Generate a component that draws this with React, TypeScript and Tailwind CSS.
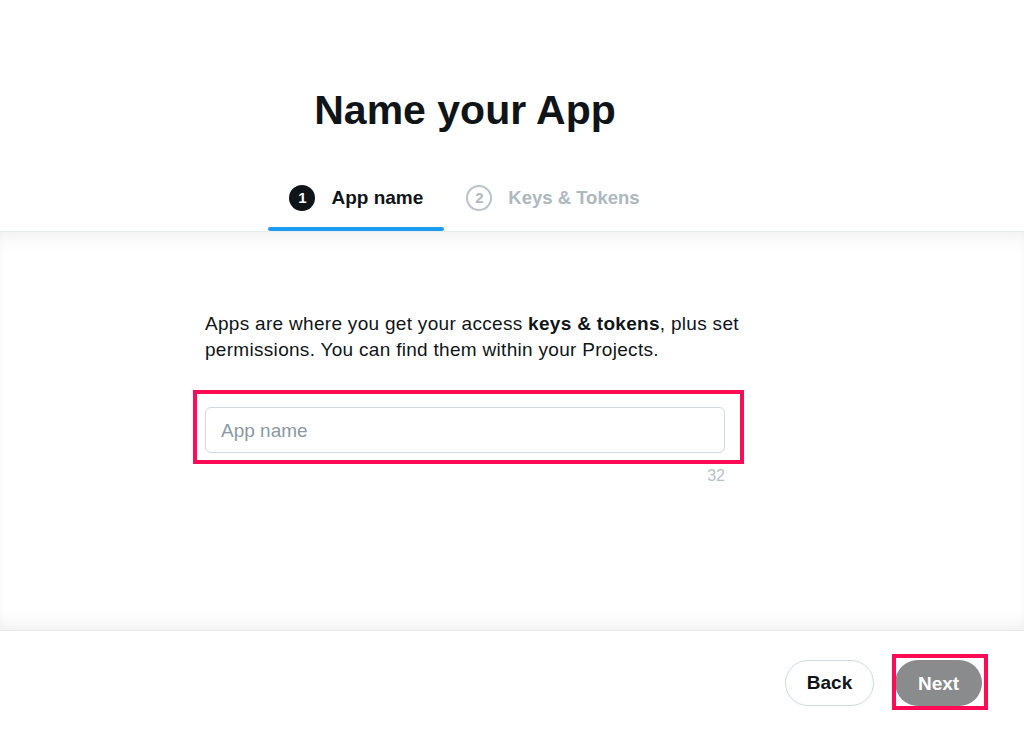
import React from "react";

export default function App() {
  return (
    <div className="h-[731px] w-full flex flex-col bg-white font-['Liberation_Sans',Arial,sans-serif] text-[#0f1419] overflow-hidden">
      <header className="border-b border-[#e6ecf0] bg-white">
        <div className="w-[520px] ml-[205px] pt-[86px] flex flex-col items-center">
          <h1 className="text-[41px] leading-[49px] font-bold">Name your App</h1>
          <div className="mt-[50px] flex">
            <div className="flex flex-col">
              <div className="h-[26px] px-[21px] flex items-center gap-4">
                <span className="w-[26px] h-[26px] rounded-full bg-[#0f1419] text-white text-[15px] font-bold flex items-center justify-center">1</span>
                <span className="text-[19px] font-bold">App name</span>
              </div>
              <div className="mt-4 h-1 rounded-full bg-[#1d9bf0]" />
            </div>
            <div className="flex flex-col">
              <div className="h-[26px] px-[22px] flex items-center gap-4">
                <span className="w-[26px] h-[26px] rounded-full border-2 border-[#b9c3ca] text-[#b0bac1] text-[15px] font-bold flex items-center justify-center">2</span>
                <span className="text-[18.5px] font-bold text-[#aeb8bf]">Keys &amp; Tokens</span>
              </div>
              <div className="mt-4 h-1" />
            </div>
          </div>
        </div>
      </header>

      <main className="flex-1 bg-white shadow-[inset_0_14px_18px_-10px_rgba(0,0,0,0.07),inset_0_-14px_18px_-10px_rgba(0,0,0,0.07)]">
        <div className="w-[520px] ml-[205px] pt-[79px]">
          <p className="text-[19px] leading-[26px] tracking-[0.3px] whitespace-nowrap text-[#0f1419]">
            Apps are where you get your access <span className="font-bold">keys &amp; tokens</span>, plus set
            <br />
            permissions. You can find them within your Projects.
          </p>
          <div className="relative mt-[44px]">
            <div className="h-[46px] rounded-[6px] border border-[#cfd9de] px-[15px] flex items-center bg-white">
              <span className="text-[19px] text-[#8b98a5] pt-[2px]">App name</span>
            </div>
            <div className="absolute -left-[12px] -top-[17px] w-[551px] h-[74px] border-4 border-[#ff0a54] pointer-events-none" />
          </div>
          <div className="mt-[13px] text-right text-[16px] leading-[20px] text-[#b3c1cc]">32</div>
        </div>
      </main>

      <footer className="h-[101px] border-t border-[#e6e8ea] bg-white flex justify-end items-start pt-[29px] pr-[42px] gap-[21px]">
        <button className="w-[89px] h-[46px] rounded-full border border-[#cfd9de] bg-white text-[19px] font-bold text-[#0f1419]">Back</button>
        <div className="relative">
          <button className="w-[87px] h-[46px] rounded-full bg-[#8a8b8d] text-[19px] font-bold text-white pt-[2px]">Next</button>
          <div className="absolute -left-[3px] -top-[6px] w-[96px] h-[56px] border-4 border-[#ff0a54] pointer-events-none" />
        </div>
      </footer>
    </div>
  );
}
